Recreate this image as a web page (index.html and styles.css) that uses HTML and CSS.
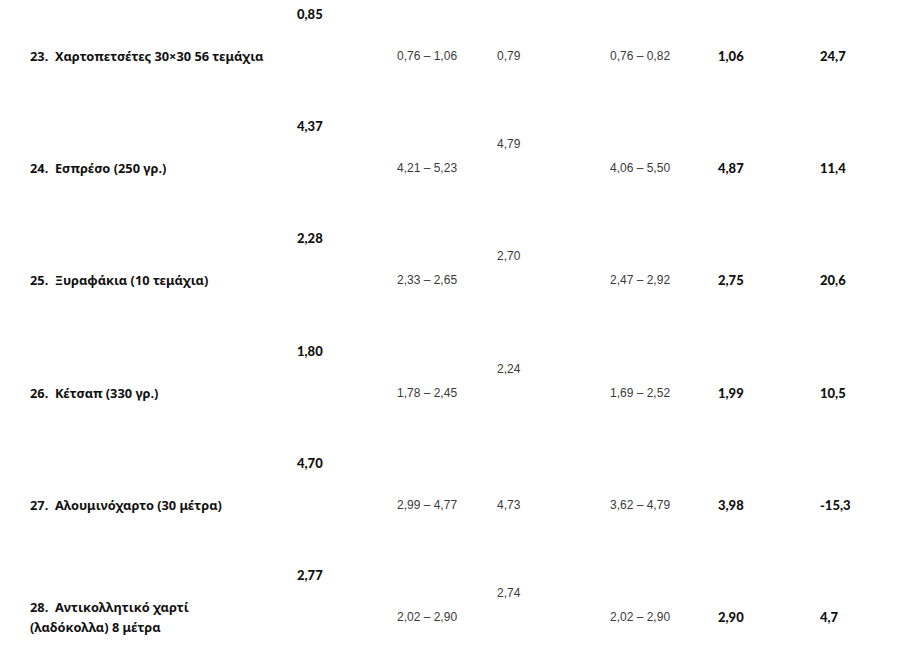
FILE: index.html
```html
<!DOCTYPE html>
<html lang="el">
<head>
<meta charset="utf-8">
<link rel="stylesheet" href="styles.css">
</head>
<body>
<div class="table">
  <div class="row">
    <div class="label">23.&nbsp; Χαρτοπετσέτες 30×30 56 τεμάχια</div>
    <div class="prev">0,85</div>
    <div class="num">0,76 – 1,06</div>
    <div class="num">0,79</div>
    <div class="num">0,76 – 0,82</div>
    <div class="bold">1,06</div>
    <div class="bold">24,7</div>
  </div>
  <div class="row">
    <div class="label">24.&nbsp; Εσπρέσο (250 γρ.)</div>
    <div class="prev">4,37</div>
    <div class="num">4,21 – 5,23</div>
    <div class="num raised">4,79</div>
    <div class="num">4,06 – 5,50</div>
    <div class="bold">4,87</div>
    <div class="bold">11,4</div>
  </div>
  <div class="row">
    <div class="label">25.&nbsp; Ξυραφάκια (10 τεμάχια)</div>
    <div class="prev">2,28</div>
    <div class="num">2,33 – 2,65</div>
    <div class="num raised">2,70</div>
    <div class="num">2,47 – 2,92</div>
    <div class="bold">2,75</div>
    <div class="bold">20,6</div>
  </div>
  <div class="row">
    <div class="label">26.&nbsp; Κέτσαπ (330 γρ.)</div>
    <div class="prev">1,80</div>
    <div class="num">1,78 – 2,45</div>
    <div class="num raised">2,24</div>
    <div class="num">1,69 – 2,52</div>
    <div class="bold">1,99</div>
    <div class="bold">10,5</div>
  </div>
  <div class="row">
    <div class="label">27.&nbsp; Αλουμινόχαρτο (30 μέτρα)</div>
    <div class="prev">4,70</div>
    <div class="num">2,99 – 4,77</div>
    <div class="num">4,73</div>
    <div class="num">3,62 – 4,79</div>
    <div class="bold">3,98</div>
    <div class="bold">-15,3</div>
  </div>
  <div class="row">
    <div class="label">28.&nbsp; Αντικολλητικό χαρτί<br>(λαδόκολλα) 8 μέτρα</div>
    <div class="prev">2,77</div>
    <div class="num">2,02 – 2,90</div>
    <div class="num raised">2,74</div>
    <div class="num">2,02 – 2,90</div>
    <div class="bold">2,90</div>
    <div class="bold">4,7</div>
  </div>
</div>
</body>
</html>
```
FILE: styles.css
```css
html, body {
  margin: 0;
  padding: 0;
  background: #ffffff;
}
body {
  font-family: Lato, "Noto Sans", sans-serif;
  font-size: 13px;
  color: #333333;
}
.table {
  padding-left: 30px;
}
.row {
  display: grid;
  grid-template-columns: 267px 100px 100px 113px 108px 102px 1fr;
  height: 112.2px;
  align-items: center;
}
.label {
  font-family: "Noto Sans", Lato, sans-serif;
  font-weight: 700;
  color: #111111;
  line-height: 20px;
  font-size: 12.8px;
}
.prev {
  align-self: start;
  padding-top: 4px;
  font-weight: 900;
  color: #111111;
  line-height: 20px;
}
.num {
  font-family: "Liberation Sans", Arial, sans-serif;
  line-height: 20px;
  font-size: 12px;
  color: #3a3a3a;
}
.num.raised {
  padding-bottom: 48px;
}
.bold {
  font-weight: 900;
  color: #111111;
  line-height: 20px;
}
```
